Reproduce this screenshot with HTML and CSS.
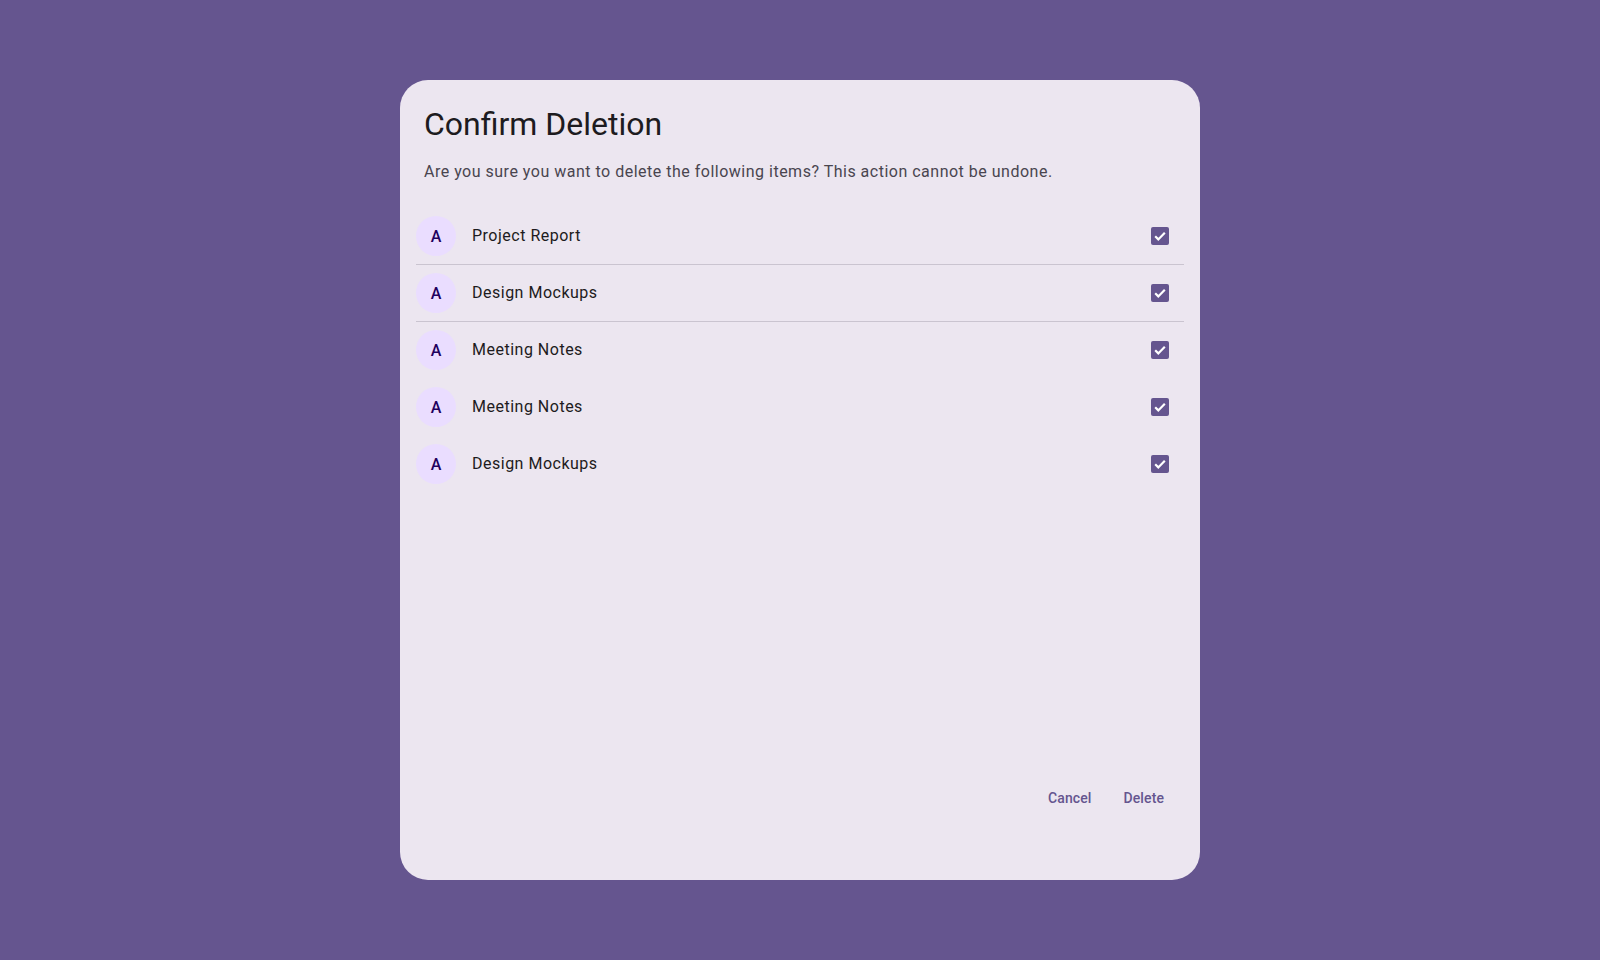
FILE: index.html
```html
<!DOCTYPE html>
<html lang="en">
<head>
<meta charset="utf-8">
<title>Confirm Deletion</title>
<link rel="stylesheet" href="styles.css">
</head>
<body>
<div class="scrim">
  <div class="dialog" role="dialog" aria-labelledby="dlg-title">
    <h1 class="title" id="dlg-title">Confirm Deletion</h1>
    <p class="body">Are you sure you want to delete the following items? This action cannot be undone.</p>
    <ul class="list">
      <li class="item divided">
        <span class="avatar">A</span>
        <span class="label">Project Report</span>
        <span class="check"><svg viewBox="0 0 18 18" width="18" height="18"><path d="M4.2 9.3l3.1 3.1 6.5-6.6" fill="none" stroke="#fff" stroke-width="2.2"/></svg></span>
      </li>
      <li class="item divided">
        <span class="avatar">A</span>
        <span class="label">Design Mockups</span>
        <span class="check"><svg viewBox="0 0 18 18" width="18" height="18"><path d="M4.2 9.3l3.1 3.1 6.5-6.6" fill="none" stroke="#fff" stroke-width="2.2"/></svg></span>
      </li>
      <li class="item">
        <span class="avatar">A</span>
        <span class="label">Meeting Notes</span>
        <span class="check"><svg viewBox="0 0 18 18" width="18" height="18"><path d="M4.2 9.3l3.1 3.1 6.5-6.6" fill="none" stroke="#fff" stroke-width="2.2"/></svg></span>
      </li>
      <li class="item">
        <span class="avatar">A</span>
        <span class="label">Meeting Notes</span>
        <span class="check"><svg viewBox="0 0 18 18" width="18" height="18"><path d="M4.2 9.3l3.1 3.1 6.5-6.6" fill="none" stroke="#fff" stroke-width="2.2"/></svg></span>
      </li>
      <li class="item">
        <span class="avatar">A</span>
        <span class="label">Design Mockups</span>
        <span class="check"><svg viewBox="0 0 18 18" width="18" height="18"><path d="M4.2 9.3l3.1 3.1 6.5-6.6" fill="none" stroke="#fff" stroke-width="2.2"/></svg></span>
      </li>
    </ul>
    <div class="actions">
      <button class="btn" type="button">Cancel</button>
      <button class="btn" type="button">Delete</button>
    </div>
  </div>
</div>
</body>
</html>
```
FILE: styles.css
```css
* { box-sizing: border-box; }
html, body {
  margin: 0;
  padding: 0;
  height: 100%;
}
body {
  background: #65558f;
  font-family: Roboto, "Noto Sans", "Liberation Sans", sans-serif;
  color: #1d1b20;
}
.scrim {
  height: 960px;
  display: flex;
  justify-content: center;
  padding-top: 80px;
}
.dialog {
  width: 800px;
  height: 800px;
  background: #ece6f0;
  border-radius: 28px;
  display: flex;
  flex-direction: column;
  padding: 24px 24px 62px 24px;
}
.title {
  margin: 0;
  font-size: 32px;
  line-height: 40px;
  font-weight: 400;
  color: #1d1b20;
}
.body {
  margin: 16px 0 0 0;
  font-size: 16px;
  line-height: 24px;
  letter-spacing: 0.5px;
  color: #49454f;
}
.list {
  list-style: none;
  margin: 24px -8px 0 -8px;
  padding: 0;
  flex: 1;
}
.item {
  height: 57px;
  display: flex;
  align-items: center;
  border-bottom: 1px solid transparent;
}
.item.divided {
  border-bottom-color: #cac4d0;
}
.avatar {
  width: 40px;
  height: 40px;
  border-radius: 50%;
  background: #eaddff;
  color: #21005d;
  font-size: 16px;
  font-weight: 500;
  display: flex;
  align-items: center;
  justify-content: center;
  flex: none;
}
.label {
  flex: 1;
  margin-left: 16px;
  font-size: 16px;
  line-height: 24px;
  letter-spacing: 0.5px;
  color: #1d1b20;
}
.check {
  width: 18px;
  height: 18px;
  border-radius: 2px;
  background: #65558f;
  display: flex;
  margin-right: 15px;
  flex: none;
}
.actions {
  display: flex;
  justify-content: flex-end;
  gap: 8px;
}
.btn {
  height: 40px;
  padding: 0 12px;
  border: 0;
  background: transparent;
  border-radius: 20px;
  font-family: Roboto, "Noto Sans", "Liberation Sans", sans-serif;
  font-size: 14px;
  font-weight: 500;
  letter-spacing: 0.1px;
  color: #65558f;
  cursor: pointer;
}
```
